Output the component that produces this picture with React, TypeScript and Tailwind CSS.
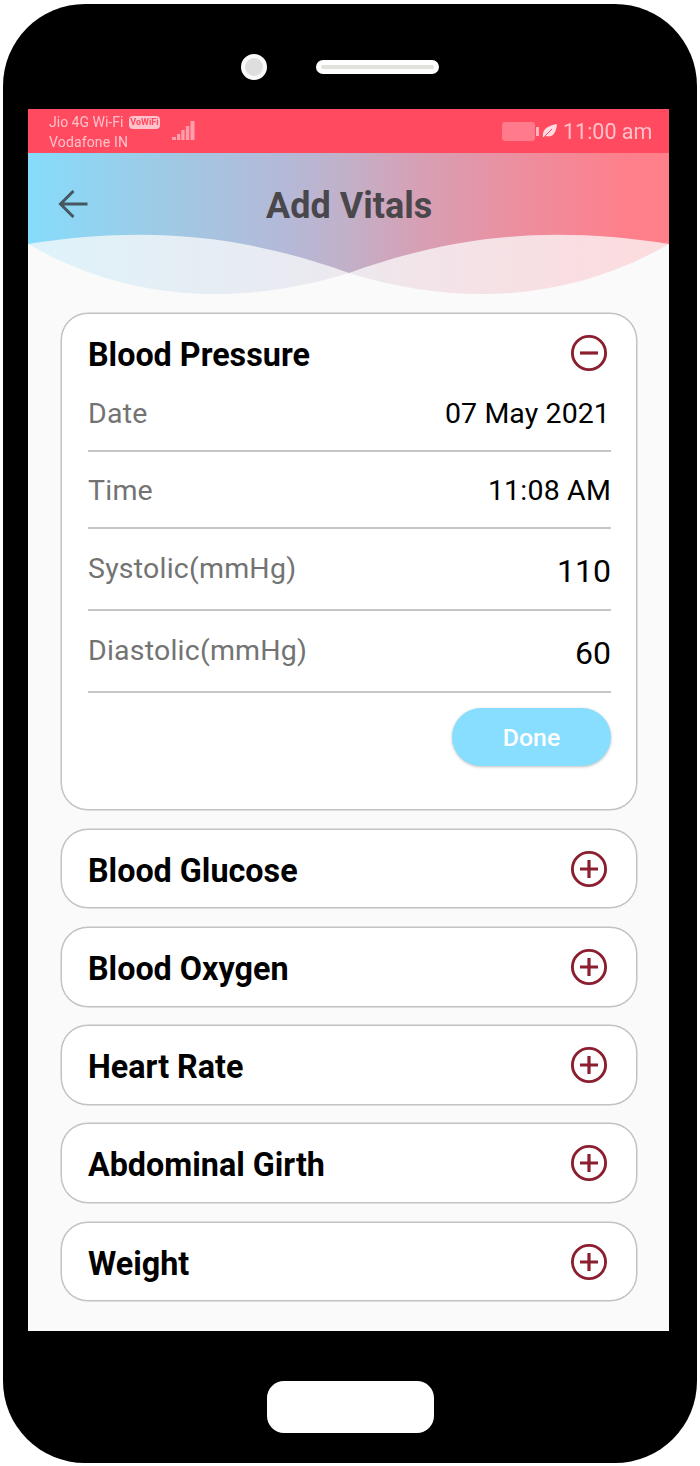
import { useState } from "react";

const ROWS = [
  { label: "Date", value: "07 May 2021", row: "h-[64px] pt-[8px]", size: "text-[28.5px] tracking-[0.1px]", pad: "pr-[1px]" },
  { label: "Time", value: "11:08 AM", row: "h-[77px] pt-[21px]", size: "text-[28.5px] tracking-[0.2px]", pad: "" },
  { label: "Systolic(mmHg)", value: "110", row: "h-[82px] pt-[22px]", size: "text-[32px] translate-y-[2px]", pad: "" },
  { label: "Diastolic(mmHg)", value: "60", row: "h-[82px] pt-[22px]", size: "text-[32px] translate-y-[2px]", pad: "" },
];

const OTHERS = ["Blood Glucose", "Blood Oxygen", "Heart Rate", "Abdominal Girth", "Weight"];

function ToggleIcon({ open }: { open: boolean }) {
  return (
    <svg width="38" height="38" viewBox="0 0 38 38" fill="none" stroke="#8c1f2f" className="shrink-0">
      <circle cx="19" cy="19" r="16.6" strokeWidth="2.9" />
      <path d={open ? "M10 19h18" : "M10 19h18M19 10v18"} strokeWidth="3.2" />
    </svg>
  );
}

function CardTitle({ title, open }: { title: string; open: boolean }) {
  return (
    <div className="flex h-[78px] items-center justify-between pr-[2px]">
      <h2 className="translate-y-[2px] text-[32.3px] leading-[38px] font-bold text-black">{title}</h2>
      <ToggleIcon open={open} />
    </div>
  );
}

function StatusBar() {
  return (
    <div className="flex h-[44px] shrink-0 items-start justify-between bg-[#ff4a5f] pr-[16px] pl-[21px] text-[#ffc2cb]">
      <div className="flex blur-[0.4px]">
        <div className="pt-[4px] text-[14px] leading-[19px]">
          <div className="flex items-center gap-[4px]">
            <span className="w-[76px] whitespace-nowrap">Jio 4G Wi-Fi</span>
            <span className="flex h-[13px] w-[31px] items-center justify-center rounded-[4px] bg-[#ffc2cb] text-[9px] leading-none font-bold text-[#ff4a5f]">VoWiFi</span>
          </div>
          <div className="translate-y-[1px] tracking-[0.15px]">Vodafone IN</div>
        </div>
        <svg width="24" height="21" viewBox="0 0 24 21" className="mt-[11px] ml-[12px]" fill="#ff9fab">
          <path d="M0 17h4v3H0zM5 14h3.300v6H5zM9.300 10h3.300v10h-3.300zM13.800 6h3.500v14h-3.500zM18.500 1h4v19h-4z" />
        </svg>
      </div>
      <div className="flex items-center pt-[8px] blur-[0.4px]">
        <span className="h-[19px] w-[33px] rounded-[3px] bg-[#ff7b8b]" />
        <span className="ml-[1px] h-[9px] w-[3px] bg-[#ffb3bd]" />
        <svg width="16" height="16" viewBox="0 0 16 16" className="ml-[3px]">
          <path d="M1 15C0 7 4 3 15 1 14 11 10 15 4 13z" fill="#ffdce1" />
          <path d="M1 15 10 6" stroke="#ff4a5f" strokeWidth="1" />
        </svg>
        <span className="ml-[5px] w-[90px] translate-y-[1px] text-[21.5px] leading-[28px] whitespace-nowrap">11:00 am</span>
      </div>
    </div>
  );
}

function Header() {
  return (
    <header className="relative h-[160px] shrink-0">
      <svg width="641" height="142" viewBox="28 153 641 142" className="absolute inset-x-0 top-0">
        <defs>
          <linearGradient id="sky" x1="28" x2="669" y1="0" y2="0" gradientUnits="userSpaceOnUse">
            <stop offset="0" stopColor="#86dcfc" />
            <stop offset="0.200" stopColor="#9dcbe6" />
            <stop offset="0.400" stopColor="#b4b9d8" />
            <stop offset="0.500" stopColor="#c2b0c8" />
            <stop offset="0.600" stopColor="#d5a1b6" />
            <stop offset="0.780" stopColor="#ee8d9d" />
            <stop offset="0.940" stopColor="#ff7f8b" />
            <stop offset="1" stopColor="#ff7f8b" />
          </linearGradient>
        </defs>
        <path
          d="M28 153H669V244C572 300 462 308 349 273C235 308 125 300 28 244Z"
          fill="url(#sky)"
          opacity="0.240"
        />
        <path
          d="M28 153H669V244C552 226 457 234 349 273C240 234 145 226 28 244Z"
          fill="url(#sky)"
        />
      </svg>
      <div className="relative flex h-[102px] items-center">
        <svg width="30" height="28" viewBox="0 0 30 28" className="ml-[30px]" fill="none" stroke="#465761" strokeWidth="3">
          <path d="M15.500 1 2.500 14l13 13M2 14h27.500" />
        </svg>
        <h1 className="ml-[178px] translate-y-[2px] text-[36px] leading-[42px] font-bold whitespace-nowrap text-[#4a474c]">Add Vitals</h1>
      </div>
    </header>
  );
}

export default function App() {
  const [open] = useState(true);
  return (
    <div className="h-[1466px] w-[700px] overflow-hidden bg-white px-[3px] pt-[4px] font-['Roboto',sans-serif]">
      <div className="flex h-[1459px] flex-col items-center rounded-[82px] bg-black">
        <div className="flex h-[105px] w-full shrink-0 items-start pl-[238px]">
          <span className="mt-[50px] h-[26px] w-[26px] rounded-full border-[4px] border-[#fafafa] bg-[#dedede]" />
          <span className="mt-[56px] ml-[49px] h-[14px] w-[123px] rounded-full border-[5px] border-white bg-[#e2e2dd]" />
        </div>

        <main className="ml-[25px] flex h-[1222px] w-[641px] shrink-0 flex-col self-start bg-[#fafafa]">
          <StatusBar />
          <Header />
          <div className="flex flex-col gap-[18.5px] pr-[32px] pl-[33px]">
            <section className="h-[497px] rounded-[27px] border border-[#c2c2c2] bg-white px-[26px] shadow-[0_0_0_0.5px_#c2c2c2]">
              <CardTitle title="Blood Pressure" open={open} />
              <div className="-mt-[4px] -mr-[1px]">
                {ROWS.map((r) => (
                  <div key={r.label} className={`flex items-start justify-between border-b-2 border-[#c6c6c6] ${r.row}`}>
                    <span className="text-[28.500px] leading-[36px] tracking-[0.220px] text-[#737373]">{r.label}</span>
                    <span className={`leading-[36px] text-black ${r.size} ${r.pad}`}>{r.value}</span>
                  </div>
                ))}
              </div>
              <div className="-mr-[1px] flex justify-end pt-[15px]">
                <button className="h-[58px] w-[159px] rounded-full bg-[#88deff] pt-[1px] text-[24.800px] font-medium text-white shadow-[0_1px_3px_rgba(0,0,0,0.250)]">
                  Done
                </button>
              </div>
            </section>
            {OTHERS.map((t) => (
              <section key={t} className="h-[79.800px] rounded-[27px] border border-[#c2c2c2] bg-white px-[26px] shadow-[0_0_0_0.5px_#c2c2c2]">
                <CardTitle title={t} open={false} />
              </section>
            ))}
          </div>
        </main>

        <div className="mt-[50px] h-[52px] w-[167px] shrink-0 rounded-[17px] bg-white" />
      </div>
    </div>
  );
}
